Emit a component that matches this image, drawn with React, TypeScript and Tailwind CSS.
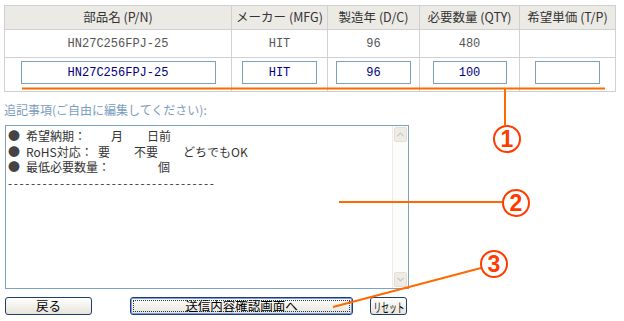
import { ChevronDown, ChevronUp } from "lucide-react";

const jp = "font-['Noto_Sans_CJK_JP','Noto_Sans',sans-serif]";
const mono = "font-['Liberation_Mono','Noto_Sans_CJK_JP',monospace]";

const HEADERS = [
  { label: "部品名 (P/N)", w: "w-[227px]" },
  { label: "メーカー (MFG)", w: "w-[96px]" },
  { label: "製造年 (D/C)", w: "w-[92px]" },
  { label: "必要数量 (QTY)", w: "w-[100px]" },
  { label: "希望単価 (T/P)", w: "w-[96px]" },
];

const VALUES = ["HN27C256FPJ-25", "HIT", "96", "480", ""];

const INPUTS = [
  { value: "HN27C256FPJ-25", w: "w-[195px]" },
  { value: "HIT", w: "w-[75px]" },
  { value: "96", w: "w-[75px]" },
  { value: "100", w: "w-[74px]" },
  { value: "", w: "w-[65px]" },
];

function Marker({ n }: { n: string }) {
  return (
    <div className="w-[28px] h-[28px] rounded-full border-2 border-[#ff3c00] bg-white flex items-center justify-center text-[#ff3c00] text-[23px] font-bold leading-none font-['Liberation_Sans',sans-serif]">
      {n}
    </div>
  );
}

export default function App() {
  return (
    <div className={`relative w-[624px] h-[321px] bg-white overflow-hidden ${jp}`}>
      <div className="pt-[5px] pl-[4px]">
        {/* Item table */}
        <table className="border-collapse border border-[#d0d0d0] text-[12px]">
          <thead>
            <tr className="h-[24px] bg-[#eceae5]">
              {HEADERS.map((h) => (
                <th
                  key={h.label}
                  className={`${h.w} border border-[#d0d0d0] font-normal text-[#333] text-[12.5px] p-0`}
                >
                  {h.label}
                </th>
              ))}
            </tr>
          </thead>
          <tbody>
            <tr className="h-[28px]">
              {VALUES.map((v, i) => (
                <td key={i} className={`border border-[#d0d0d0] text-center text-[#555] p-0 ${mono}`}>
                  {v}
                </td>
              ))}
            </tr>
            <tr className="h-[34px]">
              {INPUTS.map((inp, i) => (
                <td key={i} className="border border-[#d0d0d0] p-0 pb-[5px] pt-[1px]">
                  <div className="flex justify-center">
                    <div
                      className={`${inp.w} h-[23px] border border-[#7ba2ba] flex items-center justify-center text-[#000080] text-[12px] ${mono}`}
                    >
                      {inp.value}
                    </div>
                  </div>
                </td>
              ))}
            </tr>
          </tbody>
        </table>

        {/* Remarks */}
        <p className="mt-[11px] text-[12px] leading-[14px] text-[#7b9dbd]">
          追記事項(ご自由に編集してください):
        </p>
        <div className="mt-[8px] ml-[1px] w-[404px] h-[164px] border border-[#7ba2c2] flex text-[12px] text-[#333] leading-[15.5px]">
          <div className="flex-1 pl-[2px] pt-[2px]">
            <div className="flex">
              <span className="w-[18px] text-[#444]">●</span>
              <span className="w-[85px]">希望納期：</span>
              <span className="w-[36px]">月</span>
              <span>日前</span>
            </div>
            <div className="flex">
              <span className="w-[18px] text-[#444]">●</span>
              <span className="w-[72px]">RoHS対応：</span>
              <span className="w-[36px]">要</span>
              <span className="w-[49px]">不要</span>
              <span>どちでもOK</span>
            </div>
            <div className="flex">
              <span className="w-[18px] text-[#444]">●</span>
              <span className="w-[132px]">最低必要数量：</span>
              <span>個</span>
            </div>
            <div className="tracking-[1.6px]">------------------------------------</div>
          </div>
          <div className="w-[16px] border-l border-[#ececec] bg-[#fcfcfb] flex flex-col justify-between p-[1px]">
            <div className="h-[15px] rounded-[2px] bg-[#eeede5] border border-[#e2e0d4] flex items-center justify-center">
              <ChevronUp size={11} strokeWidth={3} className="text-[#c9c8c0]" />
            </div>
            <div className="h-[15px] rounded-[2px] bg-[#eeede5] border border-[#e2e0d4] flex items-center justify-center">
              <ChevronDown size={11} strokeWidth={3} className="text-[#c9c8c0]" />
            </div>
          </div>
        </div>

        {/* Buttons */}
        <div className="mt-[8px] ml-[1px] flex items-center text-[12.5px] text-black">
          <button className="w-[87px] h-[18px] rounded-[3px] border border-[#1e3f6e] bg-gradient-to-b from-white to-[#e6e4da] leading-none">
            戻る
          </button>
          <button className="ml-[38px] w-[223px] h-[18px] rounded-[3px] border border-[#1b3d7a] bg-gradient-to-b from-white to-[#e6e4da] shadow-[inset_0_0_0_1px_#7d9ce0] p-[2px] leading-none">
            <span className="flex h-full w-full items-center justify-center border border-dotted border-[#333]">
              送信内容確認画面へ
            </span>
          </button>
          <button className="ml-[17px] w-[37px] h-[18px] rounded-[3px] border border-[#1e3f6e] bg-gradient-to-b from-white to-[#e6e4da] leading-none whitespace-nowrap flex items-center justify-center overflow-hidden">
            <span className="inline-block text-[13px] scale-x-60">リセット</span>
          </button>
        </div>
      </div>

      {/* Annotation overlay */}
      <svg className="absolute inset-0 pointer-events-none" width="624" height="321">
        <line x1="22" y1="88.5" x2="605" y2="88.5" stroke="#ff6a00" strokeWidth="2" />
        <line x1="505" y1="89" x2="505" y2="125" stroke="#ff6a00" strokeWidth="2" />
        <line x1="339" y1="202" x2="503" y2="202" stroke="#ff6a00" strokeWidth="2" />
        <line x1="333" y1="307" x2="481" y2="268" stroke="#ff6a00" strokeWidth="2" />
      </svg>
      <div className="absolute left-[493px] top-[125px]">
        <Marker n="1" />
      </div>
      <div className="absolute left-[502px] top-[189px]">
        <Marker n="2" />
      </div>
      <div className="absolute left-[480px] top-[250px]">
        <Marker n="3" />
      </div>
    </div>
  );
}
